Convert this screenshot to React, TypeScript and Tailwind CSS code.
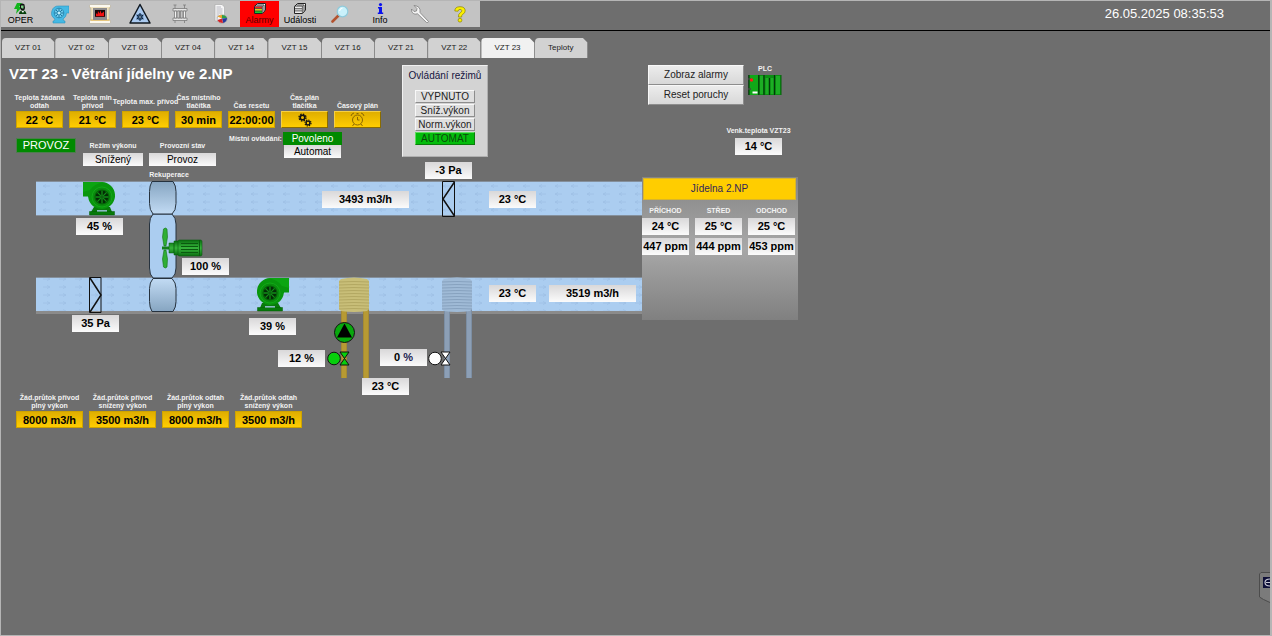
import React from "react";

const TABS = ["VZT 01", "VZT 02", "VZT 03", "VZT 04", "VZT 14", "VZT 15", "VZT 16", "VZT 21", "VZT 22", "VZT 23", "Teploty"];

function UserIcon() {
  return (
    <svg width="14" height="11" viewBox="0 0 14 11">
      <path d="M3 0h5L5 4h3L2 11l1-5H0z" fill="#12b51c" />
      <path d="M6 1.5Q8-.5 10.500 1.500L11 5Q11 7 9 7.500L7 7 6 5z" fill="#111" />
      <path d="M7 2.500h2.500v3H8L7 4.500z" fill="#7fd488" />
      <path d="M5 11q0-3 3-3.500h2q2 .5 2.500 3.500z" fill="#06400a" />
      <path d="M7.500 8l1.500 2 1-2z" fill="#fff" />
    </svg>
  );
}

function BlowerIcon() {
  return (
    <svg width="18" height="20" viewBox="0 0 18 20">
      <path d="M8 2h10v7h-2.500A7 7 0 0 1 12 15l1 2h1v2H2v-2h1l1-2A7 7 0 0 1 8 2z" fill="#45b9e4" stroke="#2b93bf" strokeWidth=".6" />
      <circle cx="8" cy="9" r="4.800" fill="#6fcbec" stroke="#1f7ea8" strokeWidth=".8" />
      <path d="M8 4.500v9M3.500 9h9M5 6l6 6M11 6l-6 6" stroke="#2079a0" strokeWidth="1" />
      <circle cx="8" cy="9" r="1.300" fill="#bdeefa" />
    </svg>
  );
}

function FireplaceIcon() {
  return (
    <svg width="22" height="20" viewBox="0 0 22 20">
      <path d="M1 1h20v3h-1v12h1v3H1v-3h1V4H1z" fill="#f0e3c0" stroke="#c9b98d" strokeWidth=".6" />
      <path d="M1 1h20v2H1zM1 17h20v2H1z" fill="#fbf8ef" />
      <path d="M2 16h18" stroke="#dba93d" />
      <path d="M4 4h14v12H4z" fill="#8d8b8d" />
      <path d="M6 6h10v7H6z" fill="#150606" />
      <path d="M7 12V9l1.500 1.500L9 7l1.500 2.500 1-3 1 3L15 7.500V12z" fill="#f31212" />
      <path d="M6 12.500h10" stroke="#501010" />
    </svg>
  );
}

function FrostIcon() {
  return (
    <svg width="22" height="22" viewBox="0 0 22 22">
      <path d="M11 1.500L21 20H1z" fill="#a9c9ef" stroke="#101820" strokeWidth="1.500" strokeLinejoin="round" />
      <circle cx="11" cy="14" r="3.300" fill="#456c96" />
      <path d="M11 10v8M7.500 12l7 4M14.500 12l-7 4" stroke="#0a1c33" strokeWidth="1" />
      <circle cx="11" cy="14" r=".8" fill="#dcecff" />
    </svg>
  );
}

function HeatExchangerIcon() {
  return (
    <svg width="16" height="20" viewBox="0 0 16 20" fill="none" stroke="#7b7b7b" strokeWidth=".8">
      <path d="M1 4.500h14V7H1zM1 14h14v2.500H1z" fill="#e4e4e4" />
      <path d="M2.500 7h2v7h-2zM6 7h1.500v7H6zM8.500 7H10v7H8.500zM11.500 7h2v7h-2z" fill="#f4f4f4" />
      <path d="M3 4.500V1M12.500 4.500V1M1.500 1h3M11 1h3M3 16.500V19M12.500 16.500V19" />
    </svg>
  );
}

function ReportIcon() {
  return (
    <svg width="15" height="20" viewBox="0 0 15 20">
      <path d="M2 .5h7l2.500 2.500v14H2z" fill="#f6f6f6" stroke="#a6a6a6" strokeWidth=".6" />
      <path d="M3.500 3H8M3.500 5h6M3.500 7h6M3.500 9h6M3.500 11H6M3.500 13H5" stroke="#a9a9b5" strokeWidth=".8" />
      <ellipse cx="9" cy="15" rx="5" ry="4.200" fill="#f3f3f3" stroke="#777" strokeWidth=".5" />
      <path d="M9 14.500V11q4 0 5 3z" fill="#2f9e46" />
      <path d="M9 14.500L4.500 12.500Q6 10.800 9 11z" fill="#e9a32a" />
      <path d="M9 14.500l5-.5q0 4-4 5z" fill="#253a9c" />
      <path d="M9 14.500l1 4.500q-4.500 0-5.500-3z" fill="#d42427" />
    </svg>
  );
}

function StackIcon({ colors }: { colors: string[] }) {
  return (
    <svg width="12" height="11" viewBox="0 0 12 11">
      <path d="M.5 3.500L3.500 .5h8v6.500l-3 3.500h-8z" fill="#fff" stroke="#222" />
      <path d="M2.500 2h7.500v6.500" fill="none" stroke="#222" strokeWidth=".9" />
      <path d="M1 3.500h7v2.200H1z" fill={colors[0]} />
      <path d="M1 5.700h7v2.200H1z" fill={colors[1]} />
      <path d="M1 7.900h7V10H1z" fill={colors[2]} />
      <path d="M1 5.700h7M1 7.900h7M8.400 3v7M.5 3.200h8" stroke="#222" strokeWidth=".7" />
    </svg>
  );
}

function MagnifierIcon() {
  return (
    <svg width="18" height="18" viewBox="0 0 18 18">
      <path d="M1.500 16.500l6-6" stroke="#b3532f" strokeWidth="2.600" strokeLinecap="round" />
      <circle cx="11.500" cy="6.500" r="5.300" fill="#c9f1fb" stroke="#8fcbdc" strokeWidth="1.200" />
      <path d="M8.500 6q.5-2.500 3-3" stroke="#fff" strokeWidth="1.200" fill="none" />
    </svg>
  );
}

function InfoIcon() {
  return (
    <svg width="7" height="11" viewBox="0 0 7 11" fill="#0b12ee">
      <circle cx="3.500" cy="1.600" r="1.600" />
      <path d="M1 4h4v5.500h1.200V11H.8V9.500H2V5.500H1z" />
    </svg>
  );
}

function WrenchIcon() {
  return (
    <svg width="20" height="20" viewBox="0 0 20 20">
      <path d="M4 1.500L7 4.500 6.500 7l-2.500.5L1.500 5Q1 9 5 10.200l2.500-.4 9 8.700q1.500.5 2-1L10 8.500Q11 2 4 1.500z" fill="#f3f3f3" stroke="#7d7d7d" strokeWidth=".8" strokeLinejoin="round" />
    </svg>
  );
}

function HelpIcon() {
  return (
    <svg width="12" height="17" viewBox="0 0 12 17" fill="#fbf000" stroke="#8c8400" strokeWidth=".7">
      <path d="M.8 5Q.8.7 6 .7t5.200 4.200q0 2.200-2.600 3.500Q7.600 9 7.600 11H4.400q-.2-3 1.800-4.200Q8 5.800 7.800 4.700 7.500 3.300 6 3.300T4 5.200z" />
      <circle cx="6" cy="14.200" r="1.900" />
    </svg>
  );
}

const TOOLS: { name: string; icon: React.ReactNode; text?: string; alarm?: boolean }[] = [
  { name: "OPER", icon: <UserIcon />, text: "OPER" },
  { name: "Vzduchotechnika", icon: <BlowerIcon /> },
  { name: "Topení", icon: <FireplaceIcon /> },
  { name: "Chlazení", icon: <FrostIcon /> },
  { name: "Výměník", icon: <HeatExchangerIcon /> },
  { name: "Protokoly", icon: <ReportIcon /> },
  { name: "Alarmy", icon: <StackIcon colors={["#f02020", "#f6ec1c", "#18c832"]} />, text: "Alarmy", alarm: true },
  { name: "Události", icon: <StackIcon colors={["#eee", "#ddd", "#eee"]} />, text: "Události" },
  { name: "Hledat", icon: <MagnifierIcon /> },
  { name: "Info", icon: <InfoIcon />, text: "Info" },
  { name: "Nastavení", icon: <WrenchIcon /> },
  { name: "Nápověda", icon: <HelpIcon /> },
];

function Toolbar() {
  return (
    <header className="flex h-[30px] items-start justify-between border-b border-black">
      <nav aria-label="Hlavní" className="-ml-px flex border-l border-[#b5b5b5] bg-[#c3c3c3]">
        {TOOLS.map((t, i) => (
          <button
            key={t.name}
            aria-label={t.name}
            className={`flex h-[26px] flex-col items-center justify-center ${t.alarm ? "mr-px w-[39px] bg-[#ff0000] text-[#5c0000]" : i === 0 ? "w-[39px] text-black" : "w-[40px] text-black"}`}
          >
            {t.icon}
            {t.text && <span className="text-[9px] leading-[12px]">{t.text}</span>}
          </button>
        ))}
      </nav>
      <time className="mr-[46px] text-[13px] leading-[26px] text-white">26.05.2025 08:35:53</time>
    </header>
  );
}

const YELLOW = "bg-gradient-to-b from-[#dfae00] to-[#ffcd00]";
const LIGHT = "bg-gradient-to-b from-[#d9d8d9] to-[#fbfbfb]";

function Caption({ children, htmlFor }: { children: React.ReactNode; htmlFor?: string }) {
  const cls = "block whitespace-pre text-center text-[7px] font-bold leading-[8px] text-[#f2f2f2]";
  return htmlFor ? <label htmlFor={htmlFor} className={cls}>{children}</label> : <span className={cls}>{children}</span>;
}

function Setpoint({ id, label, value, wide, middle }: { id: string; label: string; value: string; wide?: boolean; middle?: boolean }) {
  return (
    <div className={`flex flex-col items-center ${wide ? "w-[67px]" : "w-[47px]"}`}>
      <div className={`mb-px flex h-[16px] flex-col ${middle ? "justify-center" : "justify-end"}`}>
        <Caption htmlFor={id}>{label}</Caption>
      </div>
      <input id={id} defaultValue={value} className={`h-[17px] w-full border border-[#cfa400] text-center text-[11px] font-bold leading-[15px] text-black ${YELLOW}`} />
    </div>
  );
}

function PlanButton({ label, children }: { label: string; children: React.ReactNode }) {
  return (
    <div className="flex w-[47px] flex-col items-center">
      <div className="mb-px flex h-[16px] flex-col justify-end">
        <Caption>{label}</Caption>
      </div>
      <button aria-label={label.replace("\n", " ")} className={`flex h-[17px] w-full items-center justify-center border border-r-[#8a6c00] border-b-[#8a6c00] border-t-[#f5cf45] border-l-[#f5cf45] ${YELLOW}`}>
        {children}
      </button>
    </div>
  );
}

function GearsIcon() {
  return (
    <svg width="14" height="14" viewBox="0 0 14 14" fill="none" stroke="#111">
      <circle cx="4.500" cy="4.500" r="2.300" strokeWidth="1.600" />
      <circle cx="4.500" cy="4.500" r="3.500" strokeWidth="1.300" strokeDasharray="1.500 1.250" />
      <circle cx="10" cy="10" r="1.900" strokeWidth="1.400" />
      <circle cx="10" cy="10" r="3" strokeWidth="1.200" strokeDasharray="1.250 1.100" />
    </svg>
  );
}

function ClockIcon() {
  return (
    <svg width="15" height="15" viewBox="0 0 15 15" fill="none" stroke="#8c6800" strokeWidth="1">
      <circle cx="7.500" cy="8" r="5" />
      <path d="M7.500 5v3h2M1 4q.5-2.500 3-3M14 4q-.5-2.500-3-3M4 12l-1.500 2M11 12l1.500 2M6.500 1.500h2" />
    </svg>
  );
}

function StatusBox({ children, className }: { children: React.ReactNode; className: string }) {
  return <output className={`block h-[13px] text-center leading-[13px] ${className}`}>{children}</output>;
}

function Parameters() {
  return (
    <section className="w-[401px] pl-[15px]">
      <h1 className="-ml-[7px] text-[15px] font-bold leading-[18px] text-white">VZT 23 - Větrání jídelny ve 2.NP</h1>
      <div className="mt-[11px] flex gap-[6px]">
        <Setpoint id="t-odtah" label={"Teplota žádaná\nodtah"} value="22 °C" />
        <Setpoint id="t-min" label={"Teplota min\npřívod"} value="21 °C" />
        <Setpoint id="t-max" label="Teplota max. přívod" value="23 °C" middle />
        <Setpoint id="cas-tl" label={"Čas místního\ntlačítka"} value="30 min" />
        <Setpoint id="reset" label="Čas resetu" value="22:00:00" />
        <PlanButton label={"Čas.plán\ntlačítka"}><GearsIcon /></PlanButton>
        <PlanButton label="Časový plán"><ClockIcon /></PlanButton>
      </div>
      <div className="mt-[4px] flex h-[34px] items-end">
        <StatusBox className="mt-[7px] ml-px w-[58px] self-start bg-[#008a00] text-[11px] text-white outline outline-[#4d7d4d]">PROVOZ</StatusBox>
        <div className="ml-[8px] flex w-[60px] flex-col gap-[3px]">
          <Caption>Režim výkonu</Caption>
          <StatusBox className={`text-[10px] text-black ${LIGHT}`}>Snížený</StatusBox>
        </div>
        <div className="ml-[6px] flex w-[67px] flex-col gap-[3px]">
          <Caption>Provozní stav</Caption>
          <StatusBox className={`text-[10px] text-black ${LIGHT}`}>Provoz</StatusBox>
        </div>
        <div className="ml-[13px] flex gap-px self-start">
          <div className="flex w-[53px] justify-center pt-[3px]"><Caption>Místní ovládání:</Caption></div>
          <div className="flex flex-col items-center">
            <StatusBox className="w-[59px] bg-[#008a00] text-[10px] text-white">Povoleno</StatusBox>
            <StatusBox className={`w-[57px] text-[10px] text-black ${LIGHT}`}>Automat</StatusBox>
          </div>
        </div>
      </div>
    </section>
  );
}

const BEVEL = "border border-t-[#f8f8f8] border-l-[#f8f8f8] border-r-[#8d8d8d] border-b-[#8d8d8d]";

function ModePanel() {
  return (
    <section className="flex h-[92px] w-[86px] flex-col items-center border border-t-[#f0f0f0] border-l-[#f0f0f0] border-r-[#b0b0b0] border-b-[#b0b0b0] bg-[#d3d3d3]">
      <h2 className="whitespace-nowrap pt-[3px] text-[10px] leading-[14px] text-[#151540]">Ovládání režimů</h2>
      <div className="mt-[7px] flex w-[60px] flex-col">
        {["VYPNUTO", "Sníž.výkon", "Norm.výkon"].map((m) => (
          <button key={m} className={`mb-px h-[13px] bg-[#dfdfdf] text-[10px] leading-[11px] text-[#222] ${BEVEL}`}>{m}</button>
        ))}
        <button className="h-[13px] border border-t-[#5fdc5f] border-l-[#5fdc5f] border-r-[#0c7a0c] border-b-[#0c7a0c] bg-[#04bd0c] text-[10px] leading-[11px] text-[#0a4a0a]">AUTOMAT</button>
      </div>
    </section>
  );
}

function PlcIcon() {
  return (
    <svg width="34" height="22" viewBox="0 0 34 22">
      <path d="M1 1h32v20H1z" fill="#0a8f12" />
      <path d="M2 1h8v20H2z" fill="#10a818" />
      <path d="M12 2h3v18h-3zM17.500 4h3v16h-3zM22.500 4h3v16h-3zM28 2h4v18h-4z" fill="#1cae24" />
      <path d="M.8 1v20M10.800 1v20M16 1v20M21.500 4v17M26.500 1v20" stroke="#04380a" strokeWidth="1.200" />
      <path d="M33 1v20" stroke="#04600a" />
      <path d="M0 5h3M0 15h3" stroke="#444" strokeWidth="1.500" />
      <circle cx="3.500" cy="6" r="1.700" fill="#ff1616" />
      <path d="M4.500 17.500h5v2h-5z" fill="#fff" />
    </svg>
  );
}

function Value({ children, className = "w-[47px]" }: { children: React.ReactNode; className?: string }) {
  return <output className={`block h-[17px] whitespace-nowrap text-center text-[11px] font-bold leading-[17px] text-black ${LIGHT} ${className}`}>{children}</output>;
}

function AlarmPanel() {
  return (
    <section className="ml-[160px] flex flex-col items-end">
      <div className="flex gap-[4px]">
        <div className="flex w-[96px] flex-col">
          {["Zobraz alarmy", "Reset poruchy"].map((b) => (
            <button key={b} className={`h-[20px] bg-gradient-to-b from-[#ececec] to-[#d8d8d8] text-[10px] leading-[18px] text-[#222] ${BEVEL}`}>{b}</button>
          ))}
        </div>
        <div className="flex flex-col items-center gap-[1px]">
          <Caption>PLC</Caption>
          <PlcIcon />
        </div>
      </div>
      <div className="mt-[22px] flex w-[47px] flex-col items-center gap-[3px]">
        <Caption>Venk.teplota VZT23</Caption>
        <Value>14 °C</Value>
      </div>
    </section>
  );
}

function Fan() {
  return (
    <g>
      <path d="M-8 10L-11 15h21L8 10z" fill="#087a0c" />
      <path d="M-12.500 14.500h25V18h-25z" fill="#067a0a" stroke="#045a07" strokeWidth=".5" />
      <path d="M-5 13.200h10v1.300H-5z" fill="#abcdf0" />
      <path d="M-19-15H0A13.500 13.500 0 1 1-13.200 3L-14-.5h-5z" fill="#08960d" />
      <path d="M-19-15H2Q-8-13-12-7l-7 2z" fill="#0ba512" />
      <circle r="10" fill="#0a8c0e" stroke="#12a818" strokeWidth="1" />
      <circle r="7" fill="#032c05" stroke="#056208" strokeWidth="1.200" />
      <path d="M0-6.500v13M-6.500 0h13M-4.600-4.600l9.200 9.200M4.600-4.600l-9.200 9.200" stroke="#128c18" strokeWidth="1.300" />
      <circle r="1.800" fill="#0c6410" />
    </g>
  );
}

function Coil({ x, body, line, pipe, edge }: { x: number; body: string; line: string; pipe: string; edge: string }) {
  const ridges = Array.from({ length: 10 }, (_, i) => 282 + i * 3);
  return (
    <g>
      {[x + 2, x + 24].map((px) => (
        <g key={px}>
          <path d={`M${px} 309h6v69h-6z`} fill={edge} />
          <path d={`M${px + 1} 309h4v69h-4z`} fill={pipe} />
        </g>
      ))}
      <path d={`M${x + 2} 279q13-3 26 0l2 2v28l-2 2q-13 2-26 0l-2-2v-28z`} fill={body} />
      {ridges.map((y) => (
        <path key={y} d={`M${x} ${y}q15-1 30 0`} stroke={line} strokeWidth="1" fill="none" />
      ))}
    </g>
  );
}

function Valve({ x, fill }: { x: number; fill: string }) {
  return (
    <g stroke="#111" strokeWidth="1">
      <path d={`M${x + 6} 352h9l-9 13h9z`} fill={fill} />
      <circle cx={x} cy="358.500" r="6.300" fill={fill} />
    </g>
  );
}

function Schematic() {
  return (
    <svg className="block" width="800" height="226" viewBox="1 166 800 226">
      <defs>
        <pattern id="flow-left" x="40" y="182" width="16" height="8" patternUnits="userSpaceOnUse">
          <path d="M3 4h7M6 2.500L3 4l3 1.500" stroke="#9dbfe5" strokeWidth=".8" fill="none" />
        </pattern>
        <pattern id="flow-right" x="40" y="275" width="16" height="8" patternUnits="userSpaceOnUse">
          <path d="M3 4h7M7 2.500L10 4 7 5.500" stroke="#9dbfe5" strokeWidth=".8" fill="none" />
        </pattern>
        <linearGradient id="rotor-top" x1="0" y1="0" x2="0" y2="1">
          <stop offset="0" stopColor="#86a5c1" />
          <stop offset="1" stopColor="#c2dbf4" />
        </linearGradient>
        <linearGradient id="rotor-bottom" x1="0" y1="0" x2="0" y2="1">
          <stop offset="0" stopColor="#c2dbf4" />
          <stop offset="1" stopColor="#86a5c1" />
        </linearGradient>
        <linearGradient id="motor" x1="0" y1="0" x2="0" y2="1">
          <stop offset="0" stopColor="#0a6e10" />
          <stop offset=".5" stopColor="#36b53c" />
          <stop offset="1" stopColor="#0a6e10" />
        </linearGradient>
      </defs>

      <path d="M36 181.500h606v34H36z" fill="#abcdf0" />
      <path d="M36 182h606v33H36z" fill="url(#flow-left)" />
      <path d="M36 181.500h606M36 215.500h606" stroke="#85909c" />
      <path d="M36 277.500h606v34H36z" fill="#abcdf0" />
      <path d="M36 278h606v33H36z" fill="url(#flow-right)" />
      <path d="M36 277.500h606" stroke="#85909c" />
      <path d="M36 311h606v3H36z" fill="#8b8b8b" />

      <g stroke="#26323e" strokeWidth="1">
        <path d="M153 214h19q4 4 4 10v44q0 7-4 10h-19q-3.500-3-3.500-10v-44q0-6 3.500-10z" fill="#abcdf0" />
        <path d="M152 181.500h21q3 4 3 10v12q0 7-4 10.500h-19q-3.500-4-3.500-10.500v-12q0-6 2.500-10z" fill="url(#rotor-top)" />
        <path d="M153 278.500h19q4 4 4 10v13q0 6-3 10h-21q-2.500-4-2.500-10v-13q0-6 3.500-10z" fill="url(#rotor-bottom)" />
      </g>
      <path d="M163.500 229q2-2 3.500 0l.5 8-1.500 9h-2l-1.500-9zM164 250h2l1.500 9-.5 8q-1.500 2-3.500 0l-1-8z" fill="#2fae35" stroke="#14701a" strokeWidth=".6" />
      <path d="M162 246.500h7v3h-7z" fill="#14801a" />
      <path d="M169 243h5v10h-5zM174 241h5v14h-5z" fill="url(#motor)" stroke="#0b5c10" strokeWidth=".5" />
      <rect x="178" y="240" width="24" height="16" rx="1.500" fill="url(#motor)" stroke="#0b5c10" strokeWidth=".6" />
      <path d="M181 243.500h17M181 246.500h17M181 249.500h17M181 252.500h17" stroke="#0a5a0f" strokeWidth="1.200" />
      <path d="M199.500 240v16" stroke="#0a5a0f" />

      <g transform="translate(102 197)"><Fan /></g>
      <g transform="translate(270 293) scale(-1 1)"><Fan /></g>

      <g fill="none" stroke="#111">
        <path d="M442.500 181.500h12v35h-12z" />
        <path d="M454.500 182L443 199l11.500 17" strokeWidth="1.500" />
        <path d="M89.500 277.500h11.500v35H89.500z" />
        <path d="M90 278l11 17-11 17" strokeWidth="1.500" />
      </g>

      <Coil x={339} body="#c8be78" line="#b3a862" pipe="#b79a33" edge="#a48b35" />
      <Coil x={442} body="#9fbad6" line="#87a2bf" pipe="#8c9fb6" edge="#7c8ea3" />

      <circle cx="344.500" cy="332.500" r="10" fill="#08a80d" stroke="#111" />
      <path d="M344.500 323.500l7.500 14h-15z" fill="#000" />
      <Valve x={334} fill="#06cf0c" />
      <Valve x={435} fill="#ffffff" />
    </svg>
  );
}

const READINGS: { place: string; value: React.ReactNode; width?: string }[] = [
  { place: "left-[424px] -top-[4px]", value: "-3 Pa" },
  { place: "left-[75px] top-[52px]", value: "45 %" },
  { place: "left-[181px] top-[92px]", value: "100 %" },
  { place: "left-[71px] top-[149px]", value: "35 Pa" },
  { place: "left-[321px] top-[25px]", value: "3493 m3/h", width: "w-[87px]" },
  { place: "left-[488px] top-[25px]", value: "23 °C" },
  { place: "left-[488px] top-[119px]", value: "23 °C" },
  { place: "left-[548px] top-[119px]", value: "3519 m3/h", width: "w-[87px]" },
  { place: "left-[248px] top-[152px]", value: "39 %" },
  { place: "left-[277px] top-[184px]", value: "12 %" },
  { place: "left-[379px] top-[183px]", value: <>0 <span className="text-[#1c1c50]">%</span></> },
  { place: "left-[361px] top-[212px]", value: "23 °C" },
];

function RoomPanel() {
  return (
    <section className="absolute left-[641px] top-[11px] h-[143px] w-[156px] bg-gradient-to-b from-[#858585] via-[#a8a8a8] to-[#808080] pt-px">
      <button className="ml-px block h-[22px] w-[153px] border border-[#d9b52a] bg-[#ffcd00] text-[10px] leading-[20px] text-[#30265c]">Jídelna 2.NP</button>
      <table className="-ml-[6px] table-fixed border-separate border-spacing-x-[6px] border-spacing-y-[3px]">
        <thead>
          <tr>
            {["PŘÍCHOD", "STŘED", "ODCHOD"].map((h) => (
              <th key={h} className="w-[47px] p-0 pt-[4px]"><Caption>{h}</Caption></th>
            ))}
          </tr>
        </thead>
        <tbody>
          <tr>
            {["24 °C", "25 °C", "25 °C"].map((v, i) => <td key={i} className="p-0"><Value>{v}</Value></td>)}
          </tr>
          <tr>
            {["447 ppm", "444 ppm", "453 ppm"].map((v) => <td key={v} className="p-0"><Value>{v}</Value></td>)}
          </tr>
        </tbody>
      </table>
    </section>
  );
}

export default function App() {
  return (
    <div className="relative min-h-screen overflow-hidden border border-r-2 border-[#b5b5b5] bg-[#6e6e6e] font-['Liberation_Sans',Arial,sans-serif]">
      <Toolbar />
      <nav aria-label="Jednotky" className="mt-[7px] ml-px flex w-[586px]">
        {TABS.map((t) => (
          <a
            key={t}
            href="#"
            className={`flex h-[20px] flex-1 items-center justify-center rounded-tl-[4px] border-r border-[#8a8a8a] text-[8px] text-[#1c1c1c] [clip-path:polygon(0_0,calc(100%-5px)_0,100%_5px,100%_100%,0_100%)] ${t === "VZT 23" ? "bg-[#f1f1f1]" : "bg-[#d2d2d2]"}`}
          >
            {t}
          </a>
        ))}
      </nav>
      <main>
        <div className="flex items-start pt-[7px]">
          <Parameters />
          <ModePanel />
          <AlarmPanel />
        </div>
        <div className="relative">
          <Schematic />
          <div className="absolute left-[142px] top-[5px] w-[52px]"><Caption>Rekuperace</Caption></div>
          {READINGS.map((r) => (
            <div key={r.place} className={`absolute ${r.place}`}>
              <Value className={r.width ?? "w-[47px]"}>{r.value}</Value>
            </div>
          ))}
          <RoomPanel />
        </div>
        <div className="flex gap-[6px] pt-[2px] pl-[15px]">
          <Setpoint id="q1" wide label={"Žád.průtok přívod\nplný výkon"} value="8000 m3/h" />
          <Setpoint id="q2" wide label={"Žád.průtok přívod\nsnížený výkon"} value="3500 m3/h" />
          <Setpoint id="q3" wide label={"Žád.průtok odtah\nplný výkon"} value="8000 m3/h" />
          <Setpoint id="q4" wide label={"Žád.průtok odtah\nsnížený výkon"} value="3500 m3/h" />
        </div>
      </main>
      <button aria-label="Vzdálená podpora" className="absolute right-0 bottom-[32px]">
        <svg className="block" width="11" height="31" viewBox="0 0 11 31">
          <path d="M11 .5H2L.5 2v23l4 2.500L11 30.500" fill="#7b7b7b" stroke="#4c4c4c" />
          <path d="M4 5h7v11H4z" fill="#0f1038" />
          <path d="M11 7Q6 7 6 10.500T11 14M7 10.500h4" stroke="#c9c9d6" strokeWidth="1.200" fill="none" />
        </svg>
      </button>
    </div>
  );
}
